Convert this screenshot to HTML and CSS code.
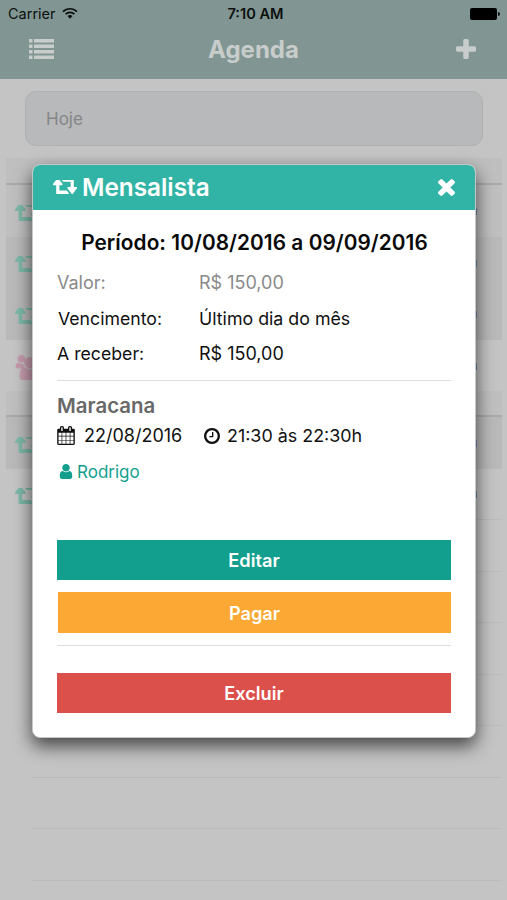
FILE: index.html
```html
<!DOCTYPE html>
<html lang="pt-BR">
<head>
    <meta charset="UTF-8">
    <meta name="viewport" content="width=device-width, initial-scale=1.0">
    <title>Agenda</title>
    <link rel="stylesheet" href="styles.css">
</head>
<body>
    <!-- Icons -->
    <svg class="icon-defs" width="0" height="0">
        <symbol id="retweet" viewBox="0 0 1920 1024" preserveAspectRatio="none">
            <path transform="translate(0 1024) scale(1 -1)" d="M1280 32q0 -13 -9.5 -22.5t-22.5 -9.5h-960q-8 0 -13.5 2t-9 7t-5.5 8t-3 11.5t-1 11.5v13v11v160v416h-192q-26 0 -45 19t-19 45q0 24 15 41l320 384q19 22 49 22t49 -22l320 -384q15 -17 15 -41q0 -26 -19 -45t-45 -19h-192v-384h576q16 0 25 -11l160 -192q7 -11 7 -21zM1920 448q0 -24 -15 -41l-320 -384q-20 -23 -49 -23t-49 23l-320 384q-15 17 -15 41q0 26 19 45t45 19h192v384h-576q-16 0 -25 12l-160 192q-7 9 -7 20q0 13 9.5 22.5t22.5 9.5h960q8 0 13.5 -2t9 -7t5.5 -8t3 -11.5t1 -11.5v-13v-11v-160v-416h192q26 0 45 -19t19 -45z"/>
        </symbol>
        <symbol id="users" viewBox="0 0 30 26">
            <circle cx="6" cy="4" r="4"/><circle cx="24" cy="4" r="4"/><circle cx="15" cy="8" r="6"/>
            <path d="M0 13q0-5 3-5 3 2 5 1 0 3 2 5H3q-3 0-3-1zM30 13q0-5-3-5-3 2-5 1 0 3-2 5h7q3 0 3-1zM4 22q0-9 6-9 5 4 10 0 6 0 6 9 0 4-4 4H8q-4 0-4-4z"/>
        </symbol>
    </svg>

    <div class="status-bar">
        <div class="carrier">
            <span>Carrier</span>
            <svg class="wifi" viewBox="0 0 16 12"><path d="M1 4.6a10 10 0 0 1 14 0M3.6 7.2a6.3 6.3 0 0 1 8.8 0" fill="none" stroke="#0c100f" stroke-width="1.7"/><path d="M5.5 9.1a3.6 3.6 0 0 1 5 0L8 11.7z" fill="#0c100f"/></svg>
        </div>
        <div class="clock">7:10 AM</div>
        <div class="battery"><span class="battery-body"></span><span class="battery-tip"></span></div>
    </div>
    <div class="navbar">
        <svg class="menu" viewBox="0 0 25 20"><path d="M0 0h3.5v3.4H0zM5 0h20v3.4H5zM0 5.5h3.5v3.4H0zM5 5.5h20v3.4H5zM0 11h3.5v3.4H0zM5 11h20v3.4H5zM0 16.5h3.5v3.4H0zM5 16.5h20v3.4H5z"/></svg>
        <h1>Agenda</h1>
        <svg class="plus" viewBox="192 128 1408 1408"><path d="M1600 736v192q0 40-28 68t-68 28h-416v416q0 40-28 68t-68 28h-192q-40 0-68-28t-28-68v-416h-416q-40 0-68-28t-28-68v-192q0-40 28-68t68-28h416v-416q0-40 28-68t68-28h192q40 0 68 28t28 68v416h416q40 0 68 28t28 68z"/></svg>
    </div>

    <!-- Schedule -->
    <div class="search">Hoje</div>
    <div class="agenda">
        <div class="day"></div>
        <div class="row shade"><svg class="repeat"><use href="#retweet"/></svg><span class="more"></span></div>
        <div class="row dark"><svg class="repeat"><use href="#retweet"/></svg><span class="more"></span></div>
        <div class="row dark"><svg class="repeat"><use href="#retweet"/></svg><span class="more"></span></div>
        <div class="row"><svg class="group"><use href="#users"/></svg><span class="more"></span></div>
        <div class="day second"></div>
        <div class="row dark"><svg class="repeat"><use href="#retweet"/></svg><span class="more"></span></div>
        <div class="row line"><svg class="repeat"><use href="#retweet"/></svg><span class="more"></span></div>
        <div class="row line"></div>
        <div class="row line"></div>
        <div class="row line"></div>
        <div class="row line"></div>
        <div class="row line"></div>
        <div class="row line"></div>
        <div class="row line"></div>
    </div>

    <!-- Details -->
    <div class="modal">
        <div class="modal-header">
            <svg class="title-icon"><use href="#retweet"/></svg>
            <h2>Mensalista</h2>
            <svg class="close" viewBox="302 366 1188 1188"><path d="M1490 1322q0 40-28 68l-136 136q-28 28-68 28t-68-28l-294-294-294 294q-28 28-68 28t-68-28l-136-136q-28-28-28-68t28-68l294-294-294-294q-28-28-28-68t28-68l136-136q28-28 68-28t68 28l294 294 294-294q28-28 68-28t68 28l136 136q28 28 28 68t-28 68l-294 294 294 294q28 28 28 68z"/></svg>
        </div>
        <div class="modal-body">
            <h3>Período: 10/08/2016 a 09/09/2016</h3>
            <div class="info">
                <span class="muted">Valor:</span><span class="muted">R$ 150,00</span>
                <span class="due">Vencimento:</span><span class="due-day">Último dia do mês</span>
                <span class="due-amount">A receber:</span><span>R$ 150,00</span>
            </div>
            <hr>
            <h4>Maracana</h4>
            <div class="when">
                <svg class="calendar" viewBox="64 0 1664 1792"><path d="M192 1664h288v-288h-288v288zm352 0h320v-288h-320v288zm-352-352h288v-320h-288v320zm352 0h320v-320h-320v320zm-352-384h288v-288h-288v288zm736 736h320v-288h-320v288zm-384-736h320v-288h-320v288zm768 736h288v-288h-288v288zm-384-352h320v-320h-320v320zm-352-864v-288q0-13-9.5-22.5t-22.5-9.5h-64q-13 0-22.5 9.5t-9.5 22.5v288q0 13 9.5 22.5t22.5 9.5h64q13 0 22.5-9.5t9.5-22.5zm736 864h288v-320h-288v320zm-384-384h320v-288h-320v288zm384 0h288v-288h-288v288zm32-480v-288q0-13-9.5-22.5t-22.5-9.5h-64q-13 0-22.5 9.5t-9.5 22.5v288q0 13 9.5 22.5t22.5 9.5h64q13 0 22.5-9.5t9.5-22.5zm384-64v1280q0 52-38 90t-90 38h-1408q-52 0-90-38t-38-90v-1280q0-52 38-90t90-38h128v-96q0-66 47-113t113-47h64q66 0 113 47t47 113v96h384v-96q0-66 47-113t113-47h64q66 0 113 47t47 113v96h128q52 0 90 38t38 90z"/></svg>
                <span class="date">22/08/2016</span>
                <svg class="hour" viewBox="128 128 1536 1536"><path d="M1024 544v448q0 14-9 23t-23 9h-320q-14 0-23-9t-9-23v-64q0-14 9-23t23-9h224v-352q0-14 9-23t23-9h64q14 0 23 9t9 23zm416 352q0-148-73-273t-198-198-273-73-273 73-198 198-73 273 73 273 198 198 273 73 273-73 198-198 73-273zm224 0q0 209-103 385.5t-279.5 279.5-385.5 103-385.5-103-279.5-279.5-103-385.5 103-385.5 279.5-279.5 385.5-103 385.5 103 279.5 279.5 103 385.5z"/></svg>
                <span class="time">21:30 às 22:30h</span>
            </div>
            <div class="player">
                <svg viewBox="256 128 1280 1536"><path d="M1536 1399q0 109-62.5 187t-150.5 78h-854q-88 0-150.5-78t-62.5-187q0-85 8.5-160.5t31.5-152 58.5-131 94-89 134.5-34.5q131 128 313 128t313-128q76 0 134.5 34.5t94 89 58.5 131 31.5 152 8.5 160.5zm-256-887q0 159-112.5 271.5t-271.5 112.5-271.5-112.5-112.5-271.5 112.5-271.5 271.5-112.5 271.5 112.5 112.5 271.5z"/></svg>
                <span>Rodrigo</span>
            </div>
            <button class="edit">Editar</button>
            <button class="pay">Pagar</button>
            <hr>
            <button class="delete">Excluir</button>
        </div>
    </div>
</body>
</html>
```
FILE: styles.css
```css
* {
    box-sizing: border-box;
}
body {
    margin: 0;
    height: 900px;
    overflow: hidden;
    position: relative;
    background: #c4c4c4;
    font-family: Inter, sans-serif;
    color: #111;
}
h1, h2, h3, h4 {
    margin: 0;
}
svg {
    display: block;
    flex: none;
    fill: currentColor;
}
.icon-defs {
    position: absolute;
}

/* Top bars */
.status-bar {
    display: grid;
    grid-template-columns: 1fr auto 1fr;
    align-items: center;
    height: 27px;
    padding: 0 7px 0 8px;
    background: #819692;
    font-size: 14.5px;
    color: #0c100f;
}
.carrier {
    display: flex;
    align-items: center;
    gap: 6px;
}
.wifi {
    width: 16px;
    height: 12px;
    margin-top: -2px;
}
.clock {
    padding-left: 3px;
    font-weight: 600;
    font-size: 14.6px;
}
.battery {
    display: flex;
    justify-content: flex-end;
    align-items: center;
    gap: 1px;
}
.battery-body {
    width: 27px;
    height: 12px;
    border-radius: 2px;
    background: #000;
}
.battery-tip {
    width: 2px;
    height: 4px;
    border-radius: 0 2px 2px 0;
    background: #111;
}
.navbar {
    display: flex;
    align-items: center;
    justify-content: space-between;
    height: 52px;
    padding: 0 31px 9px 29px;
    background: #819692;
    color: #c8cdcc;
}
.navbar h1 {
    margin-left: -3px;
    font-size: 24px;
    font-weight: 700;
    line-height: 44px;
    padding-top: 3px;
}
.menu {
    width: 25px;
    height: 20px;
}
.plus {
    width: 20px;
    height: 20px;
}

/* Schedule list */
.search {
    height: 55px;
    margin: 12px 24px 12px 25px;
    padding: 0 20px;
    border: 1px solid #aeb0b1;
    border-radius: 11px;
    background: #b7b9bb;
    font-size: 17px;
    line-height: 54px;
    color: #858687;
}
.agenda {
    margin: 0 5px 0 6px;
}
.day {
    height: 27px;
    background: #bfbfbf;
    border-bottom: 2px solid #a9abab;
}
.day.second {
    height: 26px;
}
.row {
    display: flex;
    align-items: center;
    justify-content: space-between;
    height: 51.5px;
    padding: 4px 25px 0 9px;
}
.row.shade {
    background: #bfbfbf;
}
.row.dark {
    background: #b9b9b9;
}
.row.line {
    border-bottom: 1px solid #bbb;
    margin-left: 26px;
    padding-left: 0;
}
.row.line .repeat {
    margin-left: -17px;
}
.repeat {
    width: 27px;
    height: 16px;
    color: #7db8a8;
}
.group {
    width: 30px;
    height: 25px;
    color: #c59bad;
}
.more {
    width: 7px;
    height: 7px;
    margin-bottom: 2px;
    background: #748fb4;
}

/* Modal */
.modal {
    position: absolute;
    top: 164px;
    left: 32px;
    width: 444px;
    height: 574px;
    border: 1px solid #c3c8c7;
    border-radius: 8px;
    background: #fff;
    box-shadow: 0 8px 18px rgba(0, 0, 0, 0.65);
    overflow: hidden;
}
.modal-header {
    display: flex;
    align-items: center;
    height: 45px;
    padding: 0 20px 1px;
    background: #31b4a5;
    color: #fff;
}
.title-icon {
    width: 24px;
    height: 14px;
    margin-right: 5px;
}
.modal-header h2 {
    flex: 1;
    font-size: 24.3px;
    font-weight: 600;
}
.close {
    width: 17px;
    height: 17px;
}
.modal-body {
    padding: 19px 24px 0;
}
h3 {
    margin-right: -1px;
    font-size: 20.8px;
    font-weight: 600;
    line-height: 28px;
    letter-spacing: 0.06px;
    text-align: center;
    color: #0a0a0a;
    white-space: nowrap;
}
.info {
    display: grid;
    grid-template-columns: 142px 1fr;
    grid-auto-rows: 35.4px;
    align-items: center;
    padding-top: 8px;
    font-size: 18px;
}
.info .muted {
    color: #8a8a8a;
}
.due {
    padding-left: 1px;
    font-size: 17.7px;
}
.due-day {
    font-size: 17.8px;
}
.due-amount {
    font-size: 17.7px;
}
hr {
    height: 1px;
    margin: 9px 0 0;
    border: 0;
    background: #dedede;
}
h4 {
    margin-top: 10px;
    font-size: 20.4px;
    font-weight: 600;
    line-height: 30px;
    color: #686868;
}
.when, .player {
    display: flex;
    align-items: center;
    font-size: 18px;
    height: 29px;
}
.calendar {
    width: 18px;
    height: 19px;
    margin-right: 9px;
}
.date {
    width: 120px;
}
.hour {
    width: 16px;
    height: 16px;
    margin-right: 7px;
}
.time {
    font-size: 17.9px;
}
.player {
    margin: 7px 0 54px;
    padding-left: 2px;
    font-size: 17px;
    color: #139f8e;
}
.player svg {
    width: 14px;
    height: 15px;
    margin-right: 4px;
}
button {
    display: block;
    width: 100%;
    height: 40px;
    padding: 0;
    border: 0;
    font-family: inherit;
    font-size: 18.2px;
    font-weight: 600;
    color: #fff;
}
.edit {
    background: #139f8e;
}
.pay {
    width: calc(100% - 1px);
    height: 41px;
    margin: 12px 0 12px 1px;
    background: #fba834;
}
.delete {
    margin-top: 27px;
    background: #dc504b;
}
```
